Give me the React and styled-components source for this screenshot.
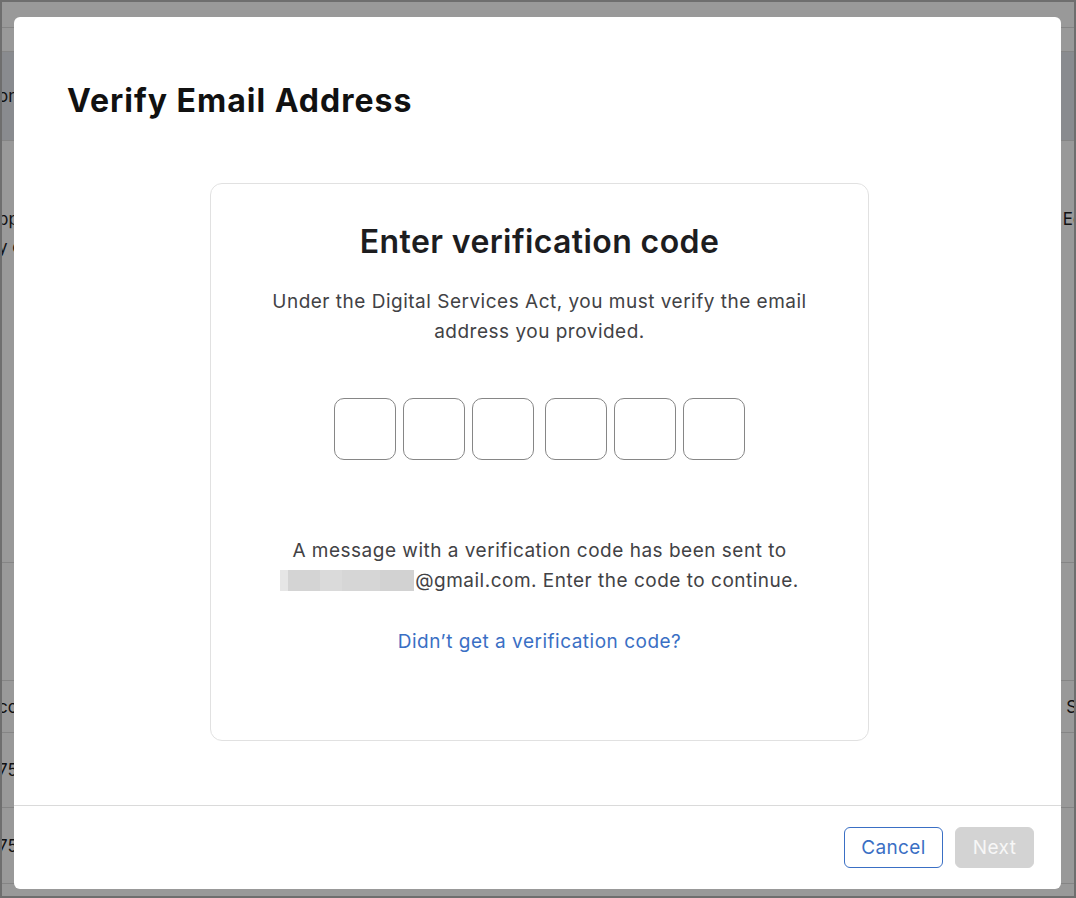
import React from "react"
import styled, { createGlobalStyle } from "styled-components"

const GlobalStyle = createGlobalStyle`
  html, body {
    margin: 0;
    padding: 0;
    background: #6e6e6e;
  }
  body {
    font-family: Inter, "Noto Sans", "Liberation Sans", sans-serif;
    -webkit-font-smoothing: antialiased;
  }
  * {
    box-sizing: border-box;
  }
`

/* the page behind the dialog */
const Screen = styled.div`
  position: relative;
  margin: 2px;
  height: 894px;
  overflow: hidden;
  background: #ffffff;
  color: #1d1d1f;
  font-size: 17px;
`

const PageRow = styled.div`
  display: flex;
  justify-content: space-between;
  align-items: ${({ $align }) => $align || "center"};
  height: ${({ $h }) => $h}px;
  padding-top: ${({ $pt }) => $pt || 0}px;
  background: ${({ $bg }) => $bg || "transparent"};
  border-bottom: 1px solid #dedede;
`

const PageCell = styled.div`
  margin-left: -4px;
  line-height: 28px;
  white-space: nowrap;
`

const PageCellRight = styled.div`
  margin-right: ${({ $cut }) => -$cut || 0}px;
  line-height: 28px;
  white-space: nowrap;
`

/* dialog */
const Backdrop = styled.div`
  position: absolute;
  inset: 0;
  background: rgba(0, 0, 0, 0.4);
  display: flex;
  padding: 15px 13px 7px 12px;
`

const Modal = styled.div`
  flex: 1;
  display: flex;
  flex-direction: column;
  background: #ffffff;
  border-radius: 6px;
  overflow: hidden;
`

const Header = styled.header`
  padding: 66px 53px 0;
`

const Title = styled.h1`
  margin: 0;
  font-size: 32px;
  line-height: 36px;
  font-weight: 700;
  color: #111111;
  letter-spacing: 1px;
`

const Body = styled.div`
  flex: 1;
  display: flex;
  justify-content: center;
  align-items: flex-start;
  padding: 64px 0 0 4px;
`

const Card = styled.section`
  width: 659px;
  border: 1px solid #e1e1e1;
  border-radius: 12px;
  padding: 40px 30px 83px;
  display: flex;
  flex-direction: column;
  align-items: center;
  text-align: center;
`

const CardTitle = styled.h2`
  margin: 0;
  font-size: 32px;
  line-height: 36px;
  font-weight: 600;
  color: #1d1d1f;
  letter-spacing: 0.4px;
`

const Text = styled.p`
  margin: ${({ $mt }) => $mt}px 0 0;
  font-size: 19px;
  line-height: 30px;
  letter-spacing: 0.5px;
  color: #424245;
  max-width: ${({ $w }) => $w || 560}px;
`

const CodeRow = styled.div`
  display: flex;
  gap: 7px;
  margin-top: 51px;
`

const CodeBox = styled.input`
  width: 62px;
  height: 62px;
  border: 1.5px solid #868686;
  border-radius: 10px;
  background: #ffffff;
  margin-right: ${({ $split }) => ($split ? 4 : 0)}px;
  font: inherit;
  text-align: center;
  outline: none;
`

const Redacted = styled.span`
  display: inline-block;
  width: 134px;
  height: 21px;
  vertical-align: -4px;
  margin-right: 1px;
  background: linear-gradient(
    90deg,
    #e6e6e6 0 8px,
    #d4d4d4 8px 40px,
    #dadada 40px 62px,
    #d6d6d6 62px 100px,
    #d2d2d2 100px 134px
  );
`

const Link = styled.a`
  margin-top: 31px;
  font-size: 19px;
  line-height: 30px;
  letter-spacing: 0.5px;
  color: #3a6fc4;
  text-decoration: none;
  cursor: pointer;
`

const Footer = styled.footer`
  display: flex;
  justify-content: flex-end;
  gap: 12px;
  border-top: 1px solid #dadada;
  padding: 21px 27px 21px;
`

const Button = styled.button`
  height: 41px;
  width: ${({ $primary }) => ($primary ? 79 : 99)}px;
  padding: 0;
  border-radius: 6px;
  font-family: inherit;
  font-size: 19px;
  font-weight: 400;
  letter-spacing: 0.4px;
  border: 1px solid ${({ $primary }) => ($primary ? "#d3d3d3" : "#3a6fc4")};
  background: ${({ $primary }) => ($primary ? "#d3d3d3" : "#ffffff")};
  color: ${({ $primary }) => ($primary ? "#f7f7f7" : "#3a6fc4")};
  cursor: ${({ disabled }) => (disabled ? "default" : "pointer")};
`

export default function App() {
  return (
    <>
      <GlobalStyle />
      <Screen>
        <PageRow $h={26} />
        <PageRow $h={24} />
        <PageRow $h={89} $bg="#e4e8ee">
          <PageCell>onboarding</PageCell>
          <PageCellRight />
        </PageRow>
        <PageRow $h={422} $align="flex-start" $pt={64}>
          <PageCell>
            ppointment
            <br />y country
          </PageCell>
          <PageCellRight $cut={19}>Edit</PageCellRight>
        </PageRow>
        <PageRow $h={118} />
        <PageRow $h={52}>
          <PageCell>ccount</PageCell>
          <PageCellRight $cut={43}>Status</PageCellRight>
        </PageRow>
        <PageRow $h={75}>
          <PageCell>75</PageCell>
        </PageRow>
        <PageRow $h={76}>
          <PageCell>75</PageCell>
        </PageRow>

        <Backdrop>
          <Modal role="dialog" aria-labelledby="verify-title">
            <Header>
              <Title id="verify-title">Verify Email Address</Title>
            </Header>
            <Body>
              <Card>
                <CardTitle>Enter verification code</CardTitle>
                <Text $mt={27} $w={570}>
                  Under the Digital Services Act, you must verify the email address you
                  provided.
                </Text>
                <CodeRow>
                  {[0, 1, 2, 3, 4, 5].map((i) => (
                    <CodeBox key={i} maxLength={1} $split={i === 2} aria-label={`Digit ${i + 1}`} />
                  ))}
                </CodeRow>
                <Text $mt={76} $w={570}>
                  A message with a verification code has been sent to <Redacted />
                  @gmail.com. Enter the code to continue.
                </Text>
                <Link>Didn’t get a verification code?</Link>
              </Card>
            </Body>
            <Footer>
              <Button>Cancel</Button>
              <Button $primary disabled>
                Next
              </Button>
            </Footer>
          </Modal>
        </Backdrop>
      </Screen>
    </>
  )
}
